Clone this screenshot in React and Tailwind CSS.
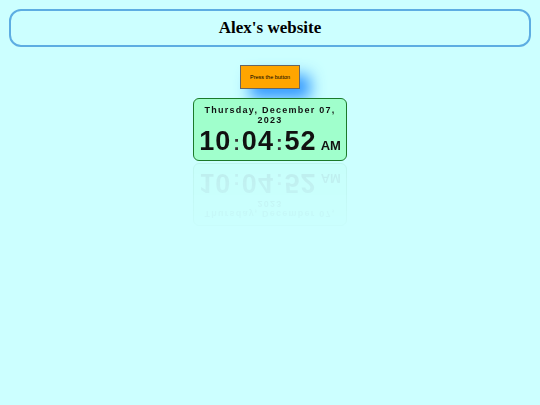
export default function App() {
	return (
		<div className="min-h-screen w-full bg-[#ccffff] pt-[9px] font-['Liberation_Sans',Arial,sans-serif]">
			<div className="mx-[9px] h-[38px] rounded-[12px] border-2 border-[#5dade2] flex items-center justify-center">
				<h1 className="font-['Liberation_Serif','Times_New_Roman',serif] font-bold text-[17px] text-black">
					Alex's website
				</h1>
			</div>
			<div className="flex flex-col items-center">
				<button className="mt-[18px] w-[60px] h-[24px] bg-[#ffa500] border border-[#666] text-[5.5px] text-black shadow-[10px_10px_15px_#3399ff]">
					Press the button
				</button>
				<div className="mt-[9px] w-[154px] h-[63px] rounded-[6px] border-[1.5px] border-[#1b7a2a] bg-[#a0ffcc] flex flex-col items-center pt-[6px] [-webkit-box-reflect:below_2px_linear-gradient(rgba(0,0,0,0.02),rgba(0,0,0,0.08))]">
					<div className="text-[9px] font-bold tracking-[1.25px] text-center leading-[10px] w-[140px] text-[#111]">
						Thursday, December 07, 2023
					</div>
					<div className="flex items-baseline font-bold text-[#111] mt-[1px] leading-[30px]">
						<span className="text-[27px] tracking-[1px]">10</span>
						<span className="text-[20px] mx-[2px] text-[#333]">:</span>
						<span className="text-[27px] tracking-[1px]">04</span>
						<span className="text-[20px] mx-[2px] text-[#333]">:</span>
						<span className="text-[27px] tracking-[1px]">52</span>
						<span className="text-[13px] ml-[4px]">AM</span>
					</div>
				</div>
			</div>
		</div>
	);
}
